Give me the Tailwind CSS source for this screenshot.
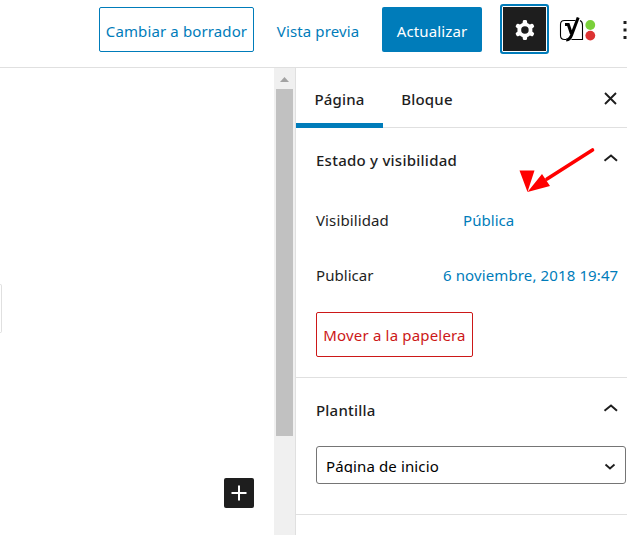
<!DOCTYPE html>
<html lang="es">
<head>
<meta charset="utf-8">
<title>Editor de páginas</title>
<script src="https://cdn.jsdelivr.net/npm/@tailwindcss/browser@4"></script>
</head>
<body class="relative flex h-[535px] w-[627px] flex-col overflow-hidden bg-white font-['Noto_Sans','Open_Sans',sans-serif] text-[15px] leading-5 tracking-[0.12px] text-[#1e1e1e]">
  <header class="flex h-[68px] shrink-0 items-start border-b border-[#e0e0e0] pt-[7px] pl-[99px] whitespace-nowrap">
    <button class="h-[45px] w-[155px] shrink-0 rounded-[2px] border border-[#007cba] pt-[3px] tracking-[0.12px] text-[#007cba]">Cambiar a borrador</button>
    <button class="ml-[18px] h-[45px] w-[92px] shrink-0 pt-[3px] tracking-[0.12px] text-[#007cba]">Vista previa</button>
    <button class="ml-[18px] h-[45px] w-[100px] shrink-0 rounded-[2px] bg-[#007cba] pt-[3px] tracking-[0.12px] text-white">Actualizar</button>
    <button aria-label="Ajustes" class="-mt-[3px] ml-[18px] flex h-[50px] w-[49px] shrink-0 items-center justify-center rounded-[3px] border-2 border-[#007cba] bg-[#1e1e1e] pt-[2px] shadow-[inset_0_0_0_1px_#fff]">
      <svg width="30" height="30" viewBox="0 0 24 24" fill="#fff"><path fill-rule="evenodd" d="M10.289 4.836A1 1 0 0111.275 4h1.306a1 1 0 01.987.836l.244 1.466c.787.26 1.503.679 2.108 1.218l1.393-.522a1 1 0 011.216.437l.653 1.130a1 1 0 01-.23 1.273l-1.148.944a6.025 6.025 0 010 2.435l1.149.946a1 1 0 01.23 1.272l-.653 1.130a1 1 0 01-1.216.437l-1.394-.522c-.605.54-1.320.958-2.108 1.218l-.244 1.466a1 1 0 01-.987.836h-1.306a1 1 0 01-.986-.836l-.244-1.466a5.995 5.995 0 01-2.108-1.218l-1.394.522a1 1 0 01-1.217-.436l-.653-1.131a1 1 0 01.23-1.272l1.149-.946a6.026 6.026 0 010-2.435l-1.148-.944a1 1 0 01-.23-1.272l.653-1.131a1 1 0 011.217-.437l1.393.522a5.994 5.994 0 012.108-1.218l.244-1.466zM14.929 12a3 3 0 11-6 0 3 3 0 016 0z"/></svg>
    </button>
    <svg class="mt-[9px] ml-[10px] shrink-0" width="38" height="27" viewBox="0 0 38 27" fill="none">
      <path d="M16.500 4.500H5.500Q1.500 4.500 1.500 8.500V19.500Q1.500 23.500 5.500 23.500H7M12.500 23.500H23.500V9Q23.500 5.500 21 4.500" stroke="#000" stroke-width="1.100"/>
      <path d="M6 8.500H9.300L12.300 17.500M19.200 1.500L12.800 18.500Q11 23.800 7.200 24" stroke="#000" stroke-width="3"/>
      <circle cx="31.300" cy="9" r="4.900" fill="#7ad03a"/><circle cx="31.300" cy="19.600" r="4.900" fill="#dc3232"/>
    </svg>
    <svg class="mt-[13px] ml-[25px] shrink-0" width="6" height="22" viewBox="0 0 6 22" fill="#1e1e1e"><path d="M1.500 1h3v3h-3zM1.500 8.500h3v3h-3zM1.500 16h3v3h-3z"/></svg>
  </header>
  <div class="flex min-h-0 flex-1">
    <main class="flex w-[274px] shrink-0 items-start justify-between">
      <div class="mt-[216px] h-[49px] w-[2px] rounded-r-[2px] border-y border-r border-[#e0e0e0]"></div>
      <button aria-label="Añadir bloque" class="mt-[410px] mr-5 flex h-[30px] w-[30px] items-center justify-center rounded-[2px] bg-[#1e1e1e]">
        <svg width="16" height="16" viewBox="0 0 16 16" stroke="#fff" stroke-width="2"><path d="M8 .5v15M.5 8h15"/></svg>
      </button>
    </main>
    <div class="flex w-[21px] shrink-0 flex-col bg-[#f0f0f0] pt-[9px] pl-[2px]">
      <svg class="ml-[4px]" width="9" height="5" viewBox="0 0 9 5" fill="#a3a3a3"><path d="M0 5L4.500 0L9 5z"/></svg>
      <div class="mt-[7px] h-[347px] w-[17px] bg-[#c1c1c1]"></div>
    </div>
    <aside class="w-[332px] shrink-0 border-l border-[#e0e0e0] whitespace-nowrap">
      <div class="flex h-[60px] border-b border-[#e0e0e0] font-medium">
        <button class="-mb-px h-[60px] w-[87px] border-b-5 border-[#007cba] pt-[6px] tracking-[0.12px]">Página</button>
        <button class="w-[88px] pt-[3px] tracking-[0.2px]">Bloque</button>
        <svg class="mt-[24px] ml-[133px]" width="13" height="13" viewBox="0 0 13 13" stroke="#1e1e1e" stroke-width="1.900"><path d="M1 1l11 11M12 1L1 12"/></svg>
      </div>
      <section class="h-[250px] border-b border-[#e0e0e0] pl-5">
        <div class="flex pt-[22px]">
          <h2 class="w-[287px] font-medium tracking-[0.25px]">Estado y visibilidad</h2>
          <svg class="mt-[3px]" width="15" height="10" viewBox="0 0 15 10" fill="none" stroke="#1e1e1e" stroke-width="2"><path d="M1.500 7.800L8 2.500L14 7.800"/></svg>
        </div>
        <div class="mt-[40px] flex"><span class="w-[147px]">Visibilidad</span><span class="tracking-[0.05px] text-[#007cba]">Pública</span></div>
        <div class="mt-[35px] flex"><span class="w-[127px] tracking-[0.05px]">Publicar</span><span class="text-[#007cba]">6 noviembre, 2018 19:47</span></div>
        <button class="mt-[27px] h-[45px] w-[157px] rounded-[2px] border border-[#cc1818] pt-px tracking-[0.18px] text-[#cc1818]">Mover a la papelera</button>
      </section>
      <section class="h-[137px] border-b border-[#e0e0e0] pt-[22px] pl-5">
        <div class="flex">
          <h2 class="w-[287px] font-medium tracking-[0.2px]">Plantilla</h2>
          <svg class="mt-[3px]" width="15" height="10" viewBox="0 0 15 10" fill="none" stroke="#1e1e1e" stroke-width="2"><path d="M1.500 7.800L8 2.500L14 7.800"/></svg>
        </div>
        <div class="mt-[26px] flex h-[38px] w-[310px] items-start rounded-[3px] border border-[#757575] pt-[9px] pl-[9px] text-black">
          <span class="h-[17px] w-[278px] overflow-hidden">Página de inicio</span>
          <svg class="mt-[7px]" width="12" height="8" viewBox="0 0 12 8" fill="none" stroke="#1e1e1e" stroke-width="1.800"><path d="M1.500 1.500L6 5.500L10.500 1.500"/></svg>
        </div>
      </section>
    </aside>
  </div>
  <svg class="pointer-events-none absolute top-[145px] left-[515px]" width="82" height="50" viewBox="0 0 82 50" fill="#f00"><path d="M77.500 5L32 34" stroke="#f00" stroke-width="3.600" stroke-linecap="round"/><path d="M4.500 25.500H19.500L12.500 47zM12.500 47L27 29L35 41z"/></svg>
</body>
</html>
